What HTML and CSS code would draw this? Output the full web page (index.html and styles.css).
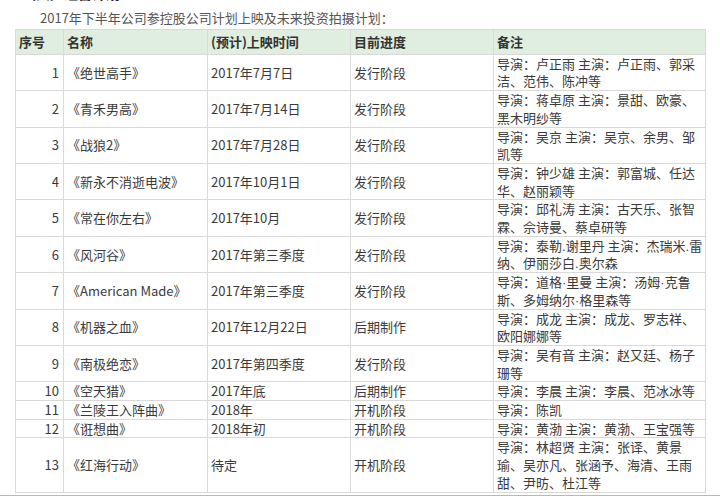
FILE: index.html
```html
<!DOCTYPE html>
<html lang="zh-CN">
<head>
<meta charset="utf-8">
<link rel="stylesheet" href="styles.css">
</head>
<body>
<div class="page">
  <h3 class="section">（四）经营计划</h3>
  <p class="intro">2017年下半年公司参控股公司计划上映及未来投资拍摄计划：</p>
  <table class="plan">
    <colgroup>
      <col class="c-no"><col class="c-name"><col class="c-date"><col class="c-stage"><col class="c-note">
    </colgroup>
    <thead>
      <tr><th>序号</th><th>名称</th><th>(预计)上映时间</th><th>目前进度</th><th>备注</th></tr>
    </thead>
    <tbody>
      <tr><td class="num">1</td><td>《绝世高手》</td><td>2017年7月7日</td><td>发行阶段</td><td class="note">导演：卢正雨 主演：卢正雨、郭采<br>洁、范伟、陈冲等</td></tr>
      <tr><td class="num">2</td><td>《青禾男高》</td><td>2017年7月14日</td><td>发行阶段</td><td class="note">导演：蒋卓原 主演：景甜、欧豪、<br>黑木明纱等</td></tr>
      <tr><td class="num">3</td><td>《战狼2》</td><td>2017年7月28日</td><td>发行阶段</td><td class="note">导演：吴京 主演：吴京、余男、邹<br>凯等</td></tr>
      <tr><td class="num">4</td><td>《新永不消逝电波》</td><td>2017年10月1日</td><td>发行阶段</td><td class="note">导演：钟少雄 主演：郭富城、任达<br>华、赵丽颖等</td></tr>
      <tr><td class="num">5</td><td>《常在你左右》</td><td>2017年10月</td><td>发行阶段</td><td class="note">导演：邱礼涛 主演：古天乐、张智<br>霖、佘诗曼、蔡卓研等</td></tr>
      <tr><td class="num">6</td><td>《风河谷》</td><td>2017年第三季度</td><td>发行阶段</td><td class="note">导演：泰勒<span class="dot">.</span>谢里丹 主演：杰瑞米<span class="dot">.</span>雷<br>纳、伊丽莎白<span class="dot">.</span>奥尔森</td></tr>
      <tr><td class="num">7</td><td>《American Made》</td><td>2017年第三季度</td><td>发行阶段</td><td class="note">导演：道格<span class="dot">·</span>里曼 主演：汤姆<span class="dot">·</span>克鲁<br>斯、多姆纳尔<span class="dot">·</span>格里森等</td></tr>
      <tr><td class="num">8</td><td>《机器之血》</td><td>2017年12月22日</td><td>后期制作</td><td class="note">导演：成龙 主演：成龙、罗志祥、<br>欧阳娜娜等</td></tr>
      <tr><td class="num">9</td><td>《南极绝恋》</td><td>2017年第四季度</td><td>发行阶段</td><td class="note">导演：吴有音 主演：赵又廷、杨子<br>珊等</td></tr>
      <tr><td class="num">10</td><td>《空天猎》</td><td>2017年底</td><td>后期制作</td><td class="note">导演：李晨 主演：李晨、范冰冰等</td></tr>
      <tr><td class="num">11</td><td>《兰陵王入阵曲》</td><td>2018年</td><td>开机阶段</td><td class="note">导演：陈凯</td></tr>
      <tr><td class="num">12</td><td>《诳想曲》</td><td>2018年初</td><td>开机阶段</td><td class="note">导演：黄渤 主演：黄渤、王宝强等</td></tr>
      <tr><td class="num">13</td><td>《红海行动》</td><td>待定</td><td>开机阶段</td><td class="note">导演：林超贤 主演：张译、黄景<br>瑜、吴亦凡、张涵予、海清、王雨<br>甜、尹昉、杜江等</td></tr>
    </tbody>
  </table>
  <div class="bottom-rule"></div>
</div>
</body>
</html>
```

FILE: styles.css
```css
html, body {
  margin: 0;
  padding: 0;
  background: #ffffff;
  overflow: hidden;
}
body {
  width: 720px;
  height: 496px;
  font-family: "Noto Sans CJK SC", "Noto Sans", sans-serif;
  color: #333333;
}
.page {
  display: flex;
  flex-direction: column;
}
.section {
  margin: -17px 0 0 22px;
  font-size: 14px;
  line-height: 20px;
  font-weight: bold;
  color: #222222;
}
.intro {
  margin: 6px 0 2px 40px;
  font-size: 13px;
  line-height: 18px;
  color: #555555;
}
.plan {
  margin-left: 15px;
  width: 690px;
  border-collapse: collapse;
  table-layout: fixed;
  font-size: 13px;
  line-height: 17.7px;
}
.c-no { width: 48px; }
.c-name { width: 144px; }
.c-date { width: 143px; }
.c-stage { width: 143px; }
.c-note { width: 212px; }
.plan th, .plan td {
  border: 1px solid #d9d9d9;
  padding: 0 3px 0 3px;
  vertical-align: middle;
  text-align: left;
  font-weight: normal;
}
.plan th {
  background: #dfeedf;
  font-weight: bold;
  color: #333333;
  padding-top: 3px;
  padding-bottom: 3px;
}
.plan td {
  color: #3a3a3a;
}
.plan td.num {
  text-align: right;
  padding-right: 4px;
}
.plan td.note {
  white-space: nowrap;
}
.dot {
  font-family: "Liberation Sans", sans-serif;
  line-height: 1;
}
.bottom-rule {
  margin-top: 2px;
  height: 3px;
  background: #a9bbd2;
}
```
